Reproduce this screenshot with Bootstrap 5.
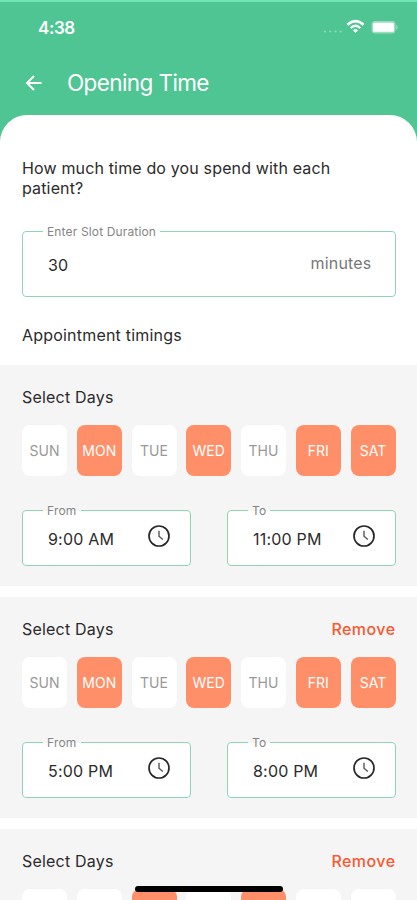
<!DOCTYPE html>
<html lang="en">
<head>
<meta charset="utf-8">
<meta name="viewport" content="width=device-width, initial-scale=1">
<title>Opening Time</title>
<link href="https://cdn.jsdelivr.net/npm/bootstrap@5.3.0/dist/css/bootstrap.min.css" rel="stylesheet">
<style>
  body { font-family: Inter, "Liberation Sans", sans-serif; font-size: 16px; line-height: 20px; letter-spacing: .2px; color: #2b2b2b; background: #fff; }
  .screen { height: 900px; }
  .app-header { height: 141px; background: #4ec592; border-top: 2px solid #71e6b3; color: #fff; }
  .status-bar { height: 51px; padding: 0 18px 0 38px; }
  .clock-text { font-size: 17px; font-weight: 600; letter-spacing: -.4px; }
  .title-bar { height: 60px; padding-left: 24px; }
  .page-title { font-size: 22.5px; line-height: 28px; font-weight: 400; margin-left: 23px; letter-spacing: -.6px; }
  .sheet { margin-top: -26px; border-radius: 27px 27px 0 0; }
  .intro { height: 250px; padding: 43px 21.5px 0 22px; }
  .question { padding-right: 50px; letter-spacing: .15px; }
  .outline-field { border: 1px solid #8fd5b4; border-radius: 4px; background: #fff; padding: 1px 23px 0 25px; }
  .outline-field > label { left: 20px; top: -7px; padding: 0 4px; font-size: 12px; line-height: 14px; color: #858585; background: linear-gradient(var(--surface) 7px, #fff 7px); }
  .duration { --surface: #fff; height: 66px; margin-top: 33px; }
  .duration > label { letter-spacing: .15px; }
  .unit { color: #777; margin-top: -3px; }
  .slot { --surface: #f5f5f5; height: 221px; background: #f5f5f5; margin-bottom: 11px; padding: 22px 21.5px 0 22px; }
  .remove-link { color: #f65a31; font-weight: 500; letter-spacing: .45px; }
  .days { margin-top: 18px; letter-spacing: 0; }
  .day { width: 45px; height: 51px; border-radius: 8px; background: #fff; color: #999; font-size: 14px; }
  .day.active { background: #ff8f68; color: #fff; }
  .times { margin-top: 34px; }
  .time-field { width: 168.5px; height: 56px; padding-right: 19px; }
  .time-field > svg { margin-bottom: 6px; }
  .home-bar { left: 135px; bottom: 8px; width: 148px; height: 6px; border-radius: 3px; background: #000; }
</style>
</head>
<body>
<svg class="d-none" aria-hidden="true">
  <symbol id="clock" viewBox="0 0 24 24"><circle cx="12" cy="12" r="10" fill="none" stroke="#262626" stroke-width="1.7"/><path d="M12 6.8v5.4l3.8 3.4" fill="none" stroke="#555" stroke-width="1.4"/></symbol>
</svg>
<div class="screen position-relative overflow-hidden">
  <header class="app-header">
    <div class="status-bar d-flex align-items-center justify-content-between">
      <span class="clock-text">4:38</span>
      <svg width="78" height="20" viewBox="0 0 78 20" fill="none">
        <g fill="#fff" opacity=".38"><circle cx="4" cy="13.5" r="1.1"/><circle cx="9.3" cy="13.5" r="1.1"/><circle cx="14.6" cy="13.5" r="1.1"/><circle cx="19.6" cy="13.5" r="1.1"/></g>
        <path d="M26.5 6.8Q34.5-.6 42.5 6.8" stroke="#fff" stroke-width="2.6"/>
        <path d="M29.7 10Q34.5 5.5 39.3 10" stroke="#fff" stroke-width="2.3"/>
        <path d="M32 12.3Q34.5 9.5 37 12.3L34.5 15z" fill="#fff"/>
        <rect x="50.5" y="3" width="24" height="12.5" rx="3.5" fill="#fff" opacity=".42"/>
        <rect x="52" y="4.8" width="21" height="9" rx="1.5" fill="#fff"/>
        <path d="M75.3 6.5q2.5 2.7 0 5.4z" fill="#fff" opacity=".5"/>
      </svg>
    </div>
    <div class="title-bar d-flex align-items-center">
      <svg width="20" height="20" viewBox="0 0 20 20" fill="none" stroke="#fff" stroke-width="2"><path d="M17.5 10H3.5M10 3L3 10l7 7"/></svg>
      <h1 class="page-title mb-0">Opening Time</h1>
    </div>
  </header>
  <main class="sheet bg-white position-relative">
    <section class="intro">
      <p class="question mb-0">How much time do you spend with each patient?</p>
      <div class="outline-field duration position-relative d-flex align-items-center justify-content-between">
        <label class="position-absolute">Enter Slot Duration</label><span>30</span><span class="unit">minutes</span>
      </div>
      <p class="mb-0 pt-4 mt-1">Appointment timings</p>
    </section>
    <section class="slot">
      <div class="d-flex justify-content-between"><span>Select Days</span></div>
      <div class="days d-flex justify-content-between">
        <div class="day d-flex align-items-center justify-content-center">SUN</div><div class="day active d-flex align-items-center justify-content-center">MON</div><div class="day d-flex align-items-center justify-content-center">TUE</div><div class="day active d-flex align-items-center justify-content-center">WED</div><div class="day d-flex align-items-center justify-content-center">THU</div><div class="day active d-flex align-items-center justify-content-center">FRI</div><div class="day active d-flex align-items-center justify-content-center">SAT</div>
      </div>
      <div class="times d-flex justify-content-between">
        <div class="outline-field time-field position-relative d-flex align-items-center justify-content-between"><label class="position-absolute">From</label><span>9:00 AM</span><svg width="24" height="24"><use href="#clock"/></svg></div>
        <div class="outline-field time-field position-relative d-flex align-items-center justify-content-between"><label class="position-absolute">To</label><span>11:00 PM</span><svg width="24" height="24"><use href="#clock"/></svg></div>
      </div>
    </section>
    <section class="slot">
      <div class="d-flex justify-content-between"><span>Select Days</span><span class="remove-link">Remove</span></div>
      <div class="days d-flex justify-content-between">
        <div class="day d-flex align-items-center justify-content-center">SUN</div><div class="day active d-flex align-items-center justify-content-center">MON</div><div class="day d-flex align-items-center justify-content-center">TUE</div><div class="day active d-flex align-items-center justify-content-center">WED</div><div class="day d-flex align-items-center justify-content-center">THU</div><div class="day active d-flex align-items-center justify-content-center">FRI</div><div class="day active d-flex align-items-center justify-content-center">SAT</div>
      </div>
      <div class="times d-flex justify-content-between">
        <div class="outline-field time-field position-relative d-flex align-items-center justify-content-between"><label class="position-absolute">From</label><span>5:00 PM</span><svg width="24" height="24"><use href="#clock"/></svg></div>
        <div class="outline-field time-field position-relative d-flex align-items-center justify-content-between"><label class="position-absolute">To</label><span>8:00 PM</span><svg width="24" height="24"><use href="#clock"/></svg></div>
      </div>
    </section>
    <section class="slot">
      <div class="d-flex justify-content-between"><span>Select Days</span><span class="remove-link">Remove</span></div>
      <div class="days d-flex justify-content-between">
        <div class="day"></div><div class="day"></div><div class="day active"></div><div class="day"></div><div class="day active"></div><div class="day"></div><div class="day"></div>
      </div>
    </section>
  </main>
  <div class="home-bar position-absolute"></div>
</div>
<script src="https://cdn.jsdelivr.net/npm/bootstrap@5.3.0/dist/js/bootstrap.bundle.min.js"></script>
</body>
</html>
